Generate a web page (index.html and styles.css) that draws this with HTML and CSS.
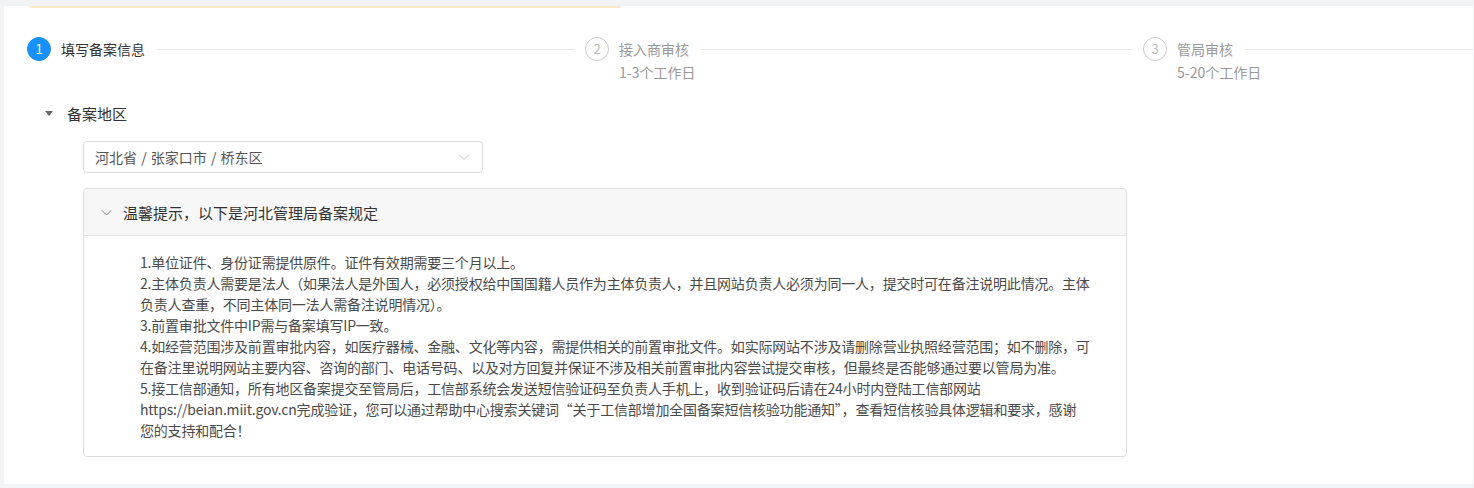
FILE: index.html
```html
<!DOCTYPE html>
<html lang="zh-CN">
<head>
    <meta charset="UTF-8">
    <meta name="viewport" content="width=device-width, initial-scale=1.0">
    <title>填写备案信息</title>
    <link rel="stylesheet" href="styles.css">
</head>
<body>

    <div class="panel">
        <div class="notice-edge"></div>

        <!-- Steps -->
        <div class="steps">
            <div class="step step-active">
                <div class="step-icon">1</div>
                <div class="step-main">
                    <div class="step-head">
                        <span class="step-title">填写备案信息</span>
                        <span class="step-tail"></span>
                    </div>
                </div>
            </div>
            <div class="step">
                <div class="step-icon">2</div>
                <div class="step-main">
                    <div class="step-head">
                        <span class="step-title">接入商审核</span>
                        <span class="step-tail"></span>
                    </div>
                    <div class="step-desc">1-3个工作日</div>
                </div>
            </div>
            <div class="step step-last">
                <div class="step-icon">3</div>
                <div class="step-main">
                    <div class="step-head">
                        <span class="step-title">管局审核</span>
                        <span class="step-tail"></span>
                    </div>
                    <div class="step-desc">5-20个工作日</div>
                </div>
            </div>
        </div>

        <!-- Region -->
        <div class="section-head">
            <span class="caret"></span>
            <span class="section-title">备案地区</span>
        </div>

        <div class="region-select">
            <span class="region-value">河北省 / 张家口市 / 桥东区</span>
            <svg class="select-arrow" width="12" height="8" viewBox="0 0 12 8">
                <polyline points="1,1.5 6,6.5 11,1.5" fill="none" stroke="#c4c4c4" stroke-width="1"/>
            </svg>
        </div>

        <div class="collapse">
            <div class="collapse-head">
                <svg class="collapse-arrow" width="11" height="7" viewBox="0 0 11 7">
                    <polyline points="1,1.5 5.5,6 10,1.5" fill="none" stroke="#777" stroke-width="1"/>
                </svg>
                <span class="collapse-title">温馨提示，以下是河北管理局备案规定</span>
            </div>
            <div class="collapse-body">
                <p>1.单位证件、身份证需提供原件。证件有效期需要三个月以上。</p>
                <p>2.主体负责人需要是法人（如果法人是外国人，必须授权给中国国籍人员作为主体负责人，并且网站负责人必须为同一人，提交时可在备注说明此情况。主体<br>负责人查重，不同主体同一法人需备注说明情况）。</p>
                <p>3.前置审批文件中IP需与备案填写IP一致。</p>
                <p>4.如经营范围涉及前置审批内容，如医疗器械、金融、文化等内容，需提供相关的前置审批文件。如实际网站不涉及请删除营业执照经营范围；如不删除，可<br>在备注里说明网站主要内容、咨询的部门、电话号码、以及对方回复并保证不涉及相关前置审批内容尝试提交审核，但最终是否能够通过要以管局为准。</p>
                <p>5.接工信部通知，所有地区备案提交至管局后，工信部系统会发送短信验证码至负责人手机上，收到验证码后请在24小时内登陆工信部网站<br>https://beian.miit.gov.cn完成验证，您可以通过帮助中心搜索关键词“关于工信部增加全国备案短信核验功能通知”，查看短信核验具体逻辑和要求，感谢<br>您的支持和配合！</p>
            </div>
        </div>
    </div>

</body>
</html>
```

FILE: styles.css
```css
body {
    margin: 0;
    padding: 0;
    height: 488px;
    overflow: hidden;
    background: #f2f3f5;
    font-family: "Noto Sans CJK SC", "Noto Sans", sans-serif;
    font-size: 14px;
    color: #333;
}

.panel {
    margin: 6px 1px 0 4px;
    height: 478px;
    background: #ffffff;
    overflow: hidden;
}

/* bottom edge of the notice box above */
.notice-edge {
    margin-left: 25px;
    width: 592px;
    height: 2px;
    background: #fde9c8;
    border-radius: 0 0 3px 3px;
}

/* steps */
.steps {
    display: grid;
    grid-template-columns: 558px 558px 1fr;
    margin-top: 29px;
    padding-left: 23px;
}

.step {
    display: flex;
    align-items: flex-start;
}

.step-icon {
    flex: none;
    width: 22px;
    height: 22px;
    border: 1px solid #cccccc;
    border-radius: 50%;
    margin-right: 10px;
    text-align: center;
    line-height: 22px;
    font-size: 13px;
    color: #bbbbbb;
}

.step-active .step-icon {
    background: #1890ff;
    border-color: #1890ff;
    color: #ffffff;
}

.step-main {
    flex: 1;
}

.step-head {
    display: flex;
    align-items: center;
    height: 24px;
}

.step-title {
    color: #999999;
    white-space: nowrap;
}

.step-active .step-title {
    color: #333333;
}

.step-tail {
    flex: 1;
    height: 1px;
    background: #e8e8e8;
    margin: 0 10px 0 12px;
}

.step-last .step-tail {
    margin-right: 0;
}

.step-desc {
    line-height: 22px;
    color: #999999;
}

/* region section */
.section-head {
    display: flex;
    align-items: center;
    height: 22px;
    margin-top: 19px;
    padding-left: 41px;
}

.caret {
    width: 0;
    height: 0;
    border-left: 4px solid transparent;
    border-right: 4px solid transparent;
    border-top: 5px solid #666666;
    margin-right: 14px;
}

.section-title {
    font-size: 15px;
    color: #333333;
}

.region-select {
    display: flex;
    align-items: center;
    justify-content: space-between;
    width: 376px;
    height: 30px;
    margin: 17px 0 0 79px;
    padding: 0 11px;
    border: 1px solid #d9d9d9;
    border-radius: 4px;
}

.region-value {
    color: #555555;
    word-spacing: 1px;
}

.select-arrow {
    margin-right: 1px;
}

/* collapse */
.collapse {
    width: 1042px;
    margin: 15px 0 0 79px;
    border: 1px solid #dddddd;
    border-radius: 4px;
}

.collapse-head {
    display: flex;
    align-items: center;
    height: 46px;
    padding-left: 17px;
    background: #f7f7f7;
    border-bottom: 1px solid #e3e3e3;
    border-radius: 4px 4px 0 0;
}

.collapse-arrow {
    margin-right: 11px;
}

.collapse-title {
    font-size: 15px;
    color: #333333;
}

.collapse-body {
    padding: 16px 0 15px 56px;
}

.collapse-body p {
    margin: 0;
    line-height: 21px;
    color: #4a4a4a;
    letter-spacing: -0.2px;
    white-space: nowrap;
}
```
